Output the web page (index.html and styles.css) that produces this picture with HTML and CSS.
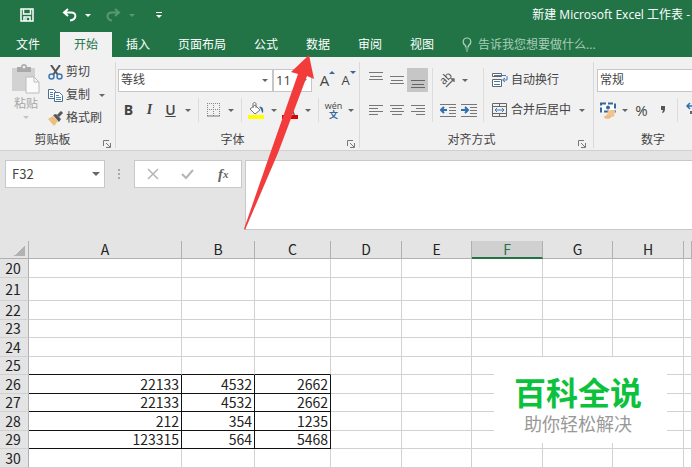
FILE: index.html
```html
<!DOCTYPE html>
<html lang="zh">
  <head>
    <meta charset="UTF-8" />
    <meta name="viewport" content="width=device-width, initial-scale=1.0" />
    <title>新建 Microsoft Excel 工作表</title>
    <link rel="stylesheet" href="styles.css">
  </head>
  <body>
    <header class="top">
      <div class="titlebar">
        <button class="quick" aria-label="保存">
          <svg width="14" height="14" viewBox="0 0 14 14"><path d="M1 1h12v12H1zM3.5 1v5h7V1M4 13V9h6v4M6 10v3" fill="none" stroke="#fff" stroke-width="1.5"/></svg>
        </button>
        <button class="quick undo" aria-label="撤消">
          <svg width="15" height="14" viewBox="0 0 15 14"><path d="M6 1L2 4.5L6 8M2.500 4.500H9C15 4.500 15 11.500 8 12.500" fill="none" stroke="#fff" stroke-width="2"/></svg>
        </button>
        <button class="caret light" aria-label="撤消列表"></button>
        <button class="quick redo" aria-label="恢复" disabled>
          <svg width="15" height="14" viewBox="0 0 15 14"><path d="M9 1L13 4.500L9 8M12.500 4.500H6C0 4.500 0 11.500 6 12.500" fill="none" stroke="#fff" stroke-width="2"/></svg>
        </button>
        <button class="caret light redo" aria-label="恢复列表" disabled></button>
        <button class="caret light custom" aria-label="自定义快速访问工具栏"></button>
        <div class="doc-name">新建 Microsoft Excel 工作表 -</div>
      </div>
      <nav class="tabs">
        <button class="tab file">文件</button>
        <button class="tab active">开始</button>
        <button class="tab">插入</button>
        <button class="tab">页面布局</button>
        <button class="tab">公式</button>
        <button class="tab">数据</button>
        <button class="tab">审阅</button>
        <button class="tab">视图</button>
        <button class="tab tell">
          <svg width="10" height="15" viewBox="0 0 10 15"><path d="M3.500 10V8.500C0 6.500 .5 1 5 1S10 6.500 6.500 8.500V10zM3.500 12h3M4 14h2" fill="none" stroke="#a9cdb8" stroke-width="1.200"/></svg>
          告诉我您想要做什么...
        </button>
      </nav>
    </header>

    <section class="ribbon">
      <div class="group">
        <div class="tools clipboard">
          <button class="paste">
            <svg width="28" height="30" viewBox="0 0 28 30"><path d="M0 4h23v23H0z" fill="#d2d2d2"/><path d="M5 3h4c0-4 6-4 6 0h4v5H5z" fill="#a9a9a9"/><circle cx="12" cy="3" r="1.500" fill="#eee"/><path d="M14 13h8l5 5v11H14z" fill="#fafafa" stroke="#bcbcbc"/><path d="M22 13v5h5" fill="none" stroke="#bcbcbc"/></svg>
            粘贴
            <i class="arrow"></i>
          </button>
          <div class="column">
            <button class="item">
              <svg width="15" height="15" viewBox="0 0 15 15"><path d="M3 0l7 10M12 0L5 10" stroke="#555" stroke-width="2" fill="none"/><circle cx="3.500" cy="11.500" r="2.500" fill="none" stroke="#3f78b0" stroke-width="1.500"/><circle cx="11.500" cy="11.500" r="2.500" fill="none" stroke="#3f78b0" stroke-width="1.500"/></svg>
              剪切
            </button>
            <button class="item">
              <svg width="15" height="15" viewBox="0 0 15 15"><path d="M.5 1.500h5l2 2v7h-7z" fill="#fff" stroke="#4d6f91"/><path d="M6.500 4.500h5l3 3v6h-8z" fill="#fff" stroke="#4d6f91"/><path d="M2 4.500h3M2 6.500h3M2 8.500h3M8 7.500h3M8 9.500h5M8 11.500h5" stroke="#4d83b5"/></svg>
              复制
              <i class="arrow"></i>
            </button>
            <button class="item">
              <svg width="15" height="15" viewBox="0 0 15 15"><path d="M0 8l5-3 5 5-4 5z" fill="#eebf7c"/><path d="M5 4l3-1 5 5-2 3z" fill="#555"/><path d="M10 5l4-4" stroke="#555" stroke-width="3"/></svg>
              格式刷
            </button>
          </div>
        </div>
        <div class="caption"><span>剪贴板</span><button class="launch" aria-label="剪贴板设置"><svg width="8" height="8" viewBox="0 0 8 8"><path d="M.5 6V.5H6M3 3l4 4M7.500 3v4.500H3" fill="none" stroke="#777"/></svg></button></div>
      </div>

      <div class="group font">
        <div class="tools">
          <div class="column">
            <div class="row">
              <div class="picker font-name">
                <select aria-label="字体"><option>等线</option></select>
                <i class="arrow"></i>
              </div>
              <div class="picker font-size">
                <select aria-label="字号"><option>11</option></select>
                <i class="arrow"></i>
              </div>
              <button class="tool letter" aria-label="增大字号">A<i class="mark up"></i></button>
              <button class="tool letter small" aria-label="减小字号">A<i class="mark"></i></button>
            </div>
            <div class="row">
              <button class="tool"><b>B</b></button>
              <button class="tool"><em>I</em></button>
              <button class="tool"><u>U</u></button>
              <button class="caret" aria-label="下划线列表"></button>
              <i class="sep"></i>
              <button class="tool" aria-label="边框"><svg width="14" height="14" viewBox="0 0 14 14"><path d="M.5 0v13M6.500 0v13M12.500 0v13M0 .5h13M0 6.500h13" stroke="#888" stroke-dasharray="1 1"/><path d="M0 13h13" stroke="#777" stroke-width="1"/></svg></button>
              <button class="caret" aria-label="边框列表"></button>
              <i class="sep"></i>
              <button class="tool" aria-label="填充颜色"><svg width="17" height="17" viewBox="0 0 17 17"><path d="M2 7l5-4 5 5-5 4z" fill="#fff" stroke="#777"/><path d="M5 6V2c0-2 3-2 3 0v4" fill="none" stroke="#777"/><path d="M11 5c3-1 5 1 4 6-2-1-1-4-4-6z" fill="#35699c"/><path d="M0 13h16v4H0z" fill="#ff0"/></svg></button>
              <button class="caret" aria-label="填充颜色列表"></button>
              <button class="tool ink" aria-label="字体颜色">A</button>
              <button class="caret" aria-label="字体颜色列表"></button>
              <i class="sep"></i>
              <button class="tool pinyin"><span>wén</span><span class="han">文</span></button>
              <button class="caret" aria-label="拼音列表"></button>
            </div>
          </div>
        </div>
        <div class="caption"><span>字体</span><button class="launch" aria-label="字体设置"><svg width="8" height="8" viewBox="0 0 8 8"><path d="M.5 6V.5H6M3 3l4 4M7.500 3v4.500H3" fill="none" stroke="#777"/></svg></button></div>
      </div>

      <div class="group align">
        <div class="tools">
          <div class="column">
            <div class="row">
              <button class="tool" aria-label="顶端对齐"><svg width="14" height="18" viewBox="0 0 14 18"><path d="M0 1.500h14M1 5.500h12M0 8.500h14" stroke="#777"/></svg></button>
              <button class="tool" aria-label="垂直居中"><svg width="14" height="18" viewBox="0 0 14 18"><path d="M0 5.500h14M1 9.500h12M0 12.500h14" stroke="#777"/></svg></button>
              <button class="tool pressed" aria-label="底端对齐"><svg width="14" height="18" viewBox="0 0 14 18"><path d="M0 9.500h14M1 13.500h12M0 16.500h14" stroke="#666"/></svg></button>
            </div>
            <div class="row">
              <button class="tool" aria-label="左对齐"><svg width="14" height="12" viewBox="0 0 14 12"><path d="M0 1.500h14M0 4.500h9M0 7.500h14M0 10.500h9" stroke="#777"/></svg></button>
              <button class="tool" aria-label="居中"><svg width="14" height="12" viewBox="0 0 14 12"><path d="M0 1.500h14M2 4.500h10M0 7.500h14M2 10.500h10" stroke="#777"/></svg></button>
              <button class="tool" aria-label="右对齐"><svg width="14" height="12" viewBox="0 0 14 12"><path d="M0 1.500h14M5 4.500h9M0 7.500h14M5 10.500h9" stroke="#777"/></svg></button>
            </div>
          </div>
          <i class="sep"></i>
          <div class="column">
            <div class="row">
              <button class="tool" aria-label="方向"><span class="slant">ab</span><svg width="17" height="16" viewBox="0 0 17 16"><path d="M7 15L15 7M12 7h3v3" fill="none" stroke="#666" stroke-width="1.300"/></svg></button>
              <button class="caret" aria-label="方向列表"></button>
            </div>
            <div class="row">
              <button class="tool" aria-label="减少缩进"><svg width="16" height="14" viewBox="0 0 16 14"><path d="M0 1.500h16M9 4.500h7M9 7.500h7M9 10.500h7M0 13.500h16" stroke="#777"/><path d="M4 4L1 7l3 3M1 7h6" fill="none" stroke="#2f70b3" stroke-width="2"/></svg></button>
              <button class="tool" aria-label="增加缩进"><svg width="16" height="14" viewBox="0 0 16 14"><path d="M0 1.500h16M9 4.500h7M9 7.500h7M9 10.500h7M0 13.500h16" stroke="#777"/><path d="M4 4l3 3-3 3M7 7H0" fill="none" stroke="#2f70b3" stroke-width="2"/></svg></button>
            </div>
          </div>
          <i class="sep"></i>
          <div class="column">
            <div class="row">
              <button class="wide"><svg width="16" height="16" viewBox="0 0 16 16"><path d="M.5 1.500h9v3h-9zM.5 7.500h9v7h-9z" fill="#fff" stroke="#666"/><path d="M2 3.500h7M2 9.500h6M2 12.500h6" stroke="#3c7ab5"/><path d="M10 3.500h4M15 4v4h-4M13 6l-2.500 2 2.500 2" fill="none" stroke="#3c7ab5"/></svg>自动换行</button>
            </div>
            <div class="row">
              <button class="wide"><svg width="16" height="16" viewBox="0 0 16 16"><path d="M.5 1.500h14v13H.5zM0 4.500h15M0 11.500h15M7.500 1v3M7.500 12v3" fill="none" stroke="#666"/><path d="M3 8h9M5 6L3 8l2 2M10 6l2 2-2 2" fill="none" stroke="#3c7ab5"/></svg>合并后居中</button>
              <button class="caret" aria-label="合并列表"></button>
            </div>
          </div>
        </div>
        <div class="caption"><span>对齐方式</span><button class="launch" aria-label="对齐设置"><svg width="8" height="8" viewBox="0 0 8 8"><path d="M.5 6V.5H6M3 3l4 4M7.500 3v4.500H3" fill="none" stroke="#777"/></svg></button></div>
      </div>

      <div class="group number">
        <div class="tools">
          <div class="column">
            <div class="row">
              <div class="picker number-format">
                <select aria-label="数字格式"><option>常规</option></select>
                <i class="arrow"></i>
              </div>
            </div>
            <div class="row">
              <button class="tool" aria-label="会计数字格式"><svg width="16" height="17" viewBox="0 0 16 17"><path d="M1 1.500h14v8H1z" fill="#fff" stroke="#35699c" stroke-width="2" stroke-dasharray="5 2"/><circle cx="8" cy="5.500" r="2" fill="#35699c"/><ellipse cx="11.500" cy="10" rx="4" ry="2" fill="#f0c48c"/><ellipse cx="10.500" cy="13" rx="4" ry="2" fill="#f0c48c"/><ellipse cx="7.500" cy="15" rx="3.500" ry="1.800" fill="#edbb80"/></svg></button>
              <button class="caret" aria-label="货币列表"></button>
              <button class="tool percent">%</button>
              <button class="tool" aria-label="千位分隔样式"><svg width="6" height="8" viewBox="0 0 6 8"><path d="M1 0h4v3c0 2-1 4-3 4l1-3H1z" fill="#555"/></svg></button>
              <i class="sep"></i>
              <button class="tool" aria-label="增加小数位数"><svg width="16" height="16" viewBox="0 0 16 16"><path d="M7 4H2M5 1L2 4l3 3" fill="none" stroke="#2f70b3" stroke-width="1.500"/><path d="M6 9v3" stroke="#666" stroke-width="2"/><circle cx="11" cy="10" r="2.500" fill="none" stroke="#666"/></svg></button>
            </div>
          </div>
        </div>
        <div class="caption"><span>数字</span></div>
      </div>
    </section>

    <section class="formula-bar">
      <div class="name-box">
        <input type="text" value="F32" aria-label="名称框" />
        <button class="caret" aria-label="名称列表"></button>
      </div>
      <i class="dots"></i>
      <div class="checks">
        <button aria-label="取消"><svg width="12" height="12" viewBox="0 0 12 12"><path d="M1 1l10 10M11 1L1 11" stroke="#b5b5b5" stroke-width="1.500"/></svg></button>
        <button aria-label="输入"><svg width="13" height="12" viewBox="0 0 13 12"><path d="M1 6l4 4 7-8" fill="none" stroke="#b5b5b5" stroke-width="2"/></svg></button>
        <button class="fx"><em>f</em><small>x</small></button>
      </div>
      <textarea aria-label="编辑栏"></textarea>
    </section>

    <main class="sheet">
      <table>
        <colgroup>
          <col class="c-num" /><col class="c-a" /><col class="c-b" /><col class="c-c" />
          <col class="c-odd" /><col class="c-even" /><col class="c-odd" /><col class="c-even" /><col class="c-odd" /><col />
        </colgroup>
        <thead>
          <tr>
            <th class="corner"></th><th>A</th><th>B</th><th>C</th><th>D</th><th>E</th><th class="current">F</th><th>G</th><th>H</th><th></th>
          </tr>
        </thead>
        <tbody>
          <tr><th>20</th><td></td><td></td><td></td><td></td><td></td><td></td><td></td><td></td><td></td></tr>
          <tr class="tall"><th>21</th><td></td><td></td><td></td><td></td><td></td><td></td><td></td><td></td><td></td></tr>
          <tr><th>22</th><td></td><td></td><td></td><td></td><td></td><td></td><td></td><td></td><td></td></tr>
          <tr><th>23</th><td></td><td></td><td></td><td></td><td></td><td></td><td></td><td></td><td></td></tr>
          <tr><th>24</th><td></td><td></td><td></td><td></td><td></td><td></td><td></td><td></td><td></td></tr>
          <tr class="above"><th>25</th><td></td><td></td><td></td><td></td><td></td><td></td><td></td><td></td><td></td></tr>
          <tr class="data"><th>26</th><td>22133</td><td>4532</td><td>2662</td><td></td><td></td><td></td><td></td><td></td><td></td></tr>
          <tr class="data"><th>27</th><td>22133</td><td>4532</td><td>2662</td><td></td><td></td><td></td><td></td><td></td><td></td></tr>
          <tr class="data"><th>28</th><td>212</td><td>354</td><td>1235</td><td></td><td></td><td></td><td></td><td></td><td></td></tr>
          <tr class="data"><th>29</th><td>123315</td><td>564</td><td>5468</td><td></td><td></td><td></td><td></td><td></td><td></td></tr>
          <tr><th>30</th><td></td><td></td><td></td><td></td><td></td><td></td><td></td><td></td><td></td></tr>
        </tbody>
      </table>
    </main>

    <svg class="pointer" width="70" height="176" viewBox="0 0 70 176"><path d="M65 0L70 24L63 21L34 98L1 175L0 174L27 96L54 19L47 17z" fill="#f23c3c"/></svg>

    <aside class="watermark">
      <strong>百科全说</strong>
      <span>助你轻松解决</span>
    </aside>
  </body>
</html>
```

FILE: styles.css
```css
* {
  box-sizing: border-box;
}
body {
  margin: 0;
  min-height: 100vh;
  position: relative;
  overflow: hidden;
  background: #fff;
  color: #444;
  font-family: "Open Sans", "Noto Sans CJK SC", sans-serif;
  font-size: 12px;
  line-height: 16px;
}
button,
input,
select,
textarea {
  font: inherit;
  color: inherit;
  border: none;
  background: none;
  padding: 0;
  margin: 0;
  border-radius: 0;
  outline: none;
}
button {
  white-space: nowrap;
}
svg {
  display: block;
  flex: none;
}

/* 标题栏和选项卡 */
.top {
  background: #227447;
  color: #fff;
}
.titlebar {
  display: flex;
  align-items: center;
  height: 32px;
  padding: 0 2px 2px 20px;
}
.quick.undo {
  margin-left: 28px;
  margin-right: 4px;
}
.quick.redo {
  margin-left: 12px;
  margin-right: 4px;
}
.redo {
  opacity: 0.25;
}
.doc-name {
  margin-left: auto;
  white-space: nowrap;
}
.tabs {
  display: flex;
  height: 25px;
}
.tab {
  padding: 0 14px;
}
.tab.file {
  width: 56px;
  padding: 0;
  margin-right: 4px;
}
.tab.active {
  background: #f1f1f1;
  color: #227447;
}
.tab.tell {
  display: flex;
  align-items: center;
  gap: 6px;
  color: #a9cdb8;
}

/* 三角 */
.caret {
  display: flex;
  align-items: center;
  justify-content: center;
  flex: none;
  width: 13px;
  height: 24px;
}
.caret::before,
.arrow {
  content: "";
  border: 3px solid transparent;
  border-top-color: #666;
  border-bottom: none;
}
.light::before {
  border-top-color: #fff;
}
.custom {
  margin-left: 14px;
  flex-direction: column;
  gap: 2px;
}
.custom::before {
  order: 2;
}
.custom::after {
  content: "";
  width: 6px;
  height: 1px;
  background: #fff;
}

/* 功能区 */
.ribbon {
  display: flex;
  background: #f1f1f1;
  border-bottom: 1px solid #d0d0d0;
  padding: 5px 0 2px;
  overflow: hidden;
}
.group {
  flex: none;
  border-right: 1px solid #d9d9d9;
  padding: 0 2px;
}
.group.align {
  padding: 0 5px;
}
.group.number {
  padding: 0 3px;
}
.tools {
  display: flex;
  height: 70px;
  padding-top: 6px;
}
.column {
  display: flex;
  flex-direction: column;
  gap: 6px;
}
.row {
  display: flex;
  align-items: center;
  height: 24px;
}
.tool {
  position: relative;
  display: flex;
  align-items: center;
  justify-content: center;
  flex: none;
  width: 21px;
  height: 24px;
  font-size: 14px;
}
.tool em {
  font-family: "Liberation Serif", serif;
  font-weight: bold;
}
.tool u {
  font-weight: 600;
}
.pressed {
  background: #c6c6c6;
}
.sep {
  flex: none;
  width: 1px;
  height: 24px;
  margin: 0 4px;
  background: #dcdcdc;
}
.tools > .sep {
  height: 54px;
}
.wide {
  display: flex;
  align-items: center;
  gap: 3px;
  height: 24px;
  padding: 0 4px;
}
.caption {
  display: flex;
  align-items: center;
  height: 16px;
}
.caption span {
  flex: 1;
  text-align: center;
}
.launch {
  align-self: flex-end;
  width: 10px;
}

.clipboard {
  width: 111px;
  padding: 2px 0 0 10px;
  gap: 8px;
}
.clipboard .column {
  gap: 7px;
}
.paste {
  display: flex;
  flex-direction: column;
  align-items: center;
  align-self: flex-start;
  width: 28px;
  color: #a6a6a6;
}
.paste svg {
  margin-bottom: 2px;
}
.paste .arrow {
  border-top-color: #c4c4c4;
  margin-top: 4px;
}
.item {
  display: flex;
  align-items: center;
  gap: 3px;
  height: 16px;
}
.item .arrow {
  margin-left: 6px;
}

.picker {
  display: flex;
  align-items: center;
  height: 23px;
  padding: 0 4px 0 2px;
  border: 1px solid #c6c6c6;
  background: #fff;
}
.picker select {
  appearance: none;
  flex: 1;
  min-width: 0;
}
.font-name {
  width: 155px;
}
.font-size {
  width: 39px;
  margin-right: 2px;
  font-size: 13px;
}
.number-format {
  width: 112px;
}
.letter {
  font-size: 15px;
}
.letter.small {
  font-size: 13px;
}
.mark {
  position: absolute;
  right: 0;
  top: 3px;
  border: 3px solid transparent;
  border-top-color: #35699c;
  border-bottom: none;
}
.mark.up {
  border-top: none;
  border-bottom: 3px solid #35699c;
}
.ink::after {
  content: "";
  position: absolute;
  left: 2px;
  bottom: 3px;
  width: 16px;
  height: 4px;
  background: #e00000;
}
.pinyin {
  flex-direction: column;
  font-size: 9px;
  line-height: 9px;
}
.han {
  color: #35699c;
  font-weight: bold;
}
.slant {
  position: absolute;
  left: 2px;
  top: 2px;
  font-size: 11px;
  transform: rotate(-45deg);
}
.percent {
  font-size: 15px;
}

/* 编辑栏 */
.formula-bar {
  display: flex;
  align-items: flex-start;
  background: #e4e4e4;
  padding: 9px 0 11px 5px;
}
.name-box,
.checks {
  display: flex;
  align-items: center;
  flex: none;
  height: 28px;
  border: 1px solid #c8c8c8;
  background: #fff;
}
.name-box {
  width: 100px;
  padding: 0 2px 0 6px;
}
.name-box input {
  flex: 1;
  min-width: 0;
  font-family: "Noto Sans CJK SC", sans-serif;
  font-size: 13px;
}
.name-box .caret::before {
  border-width: 4px 4px 0;
}
.dots {
  width: 2px;
  height: 11px;
  margin: 9px 14px 0 13px;
  background: repeating-linear-gradient(#aaa 0 2px, transparent 2px 4px);
}
.checks {
  width: 108px;
  margin-right: 3px;
}
.checks button {
  display: flex;
  flex: 1;
  align-items: center;
  justify-content: center;
}
.checks .fx {
  font: bold 15px "Liberation Serif", serif;
  color: #666;
}
.fx small {
  font-size: 11px;
  font-style: italic;
}
textarea {
  flex: 1;
  min-width: 0;
  height: 70px;
  border: 1px solid #c8c8c8;
  border-right: none;
  background: #fff;
  resize: none;
}

/* 表格 */
.sheet {
  font-family: "Noto Sans CJK SC", sans-serif;
  font-size: 14px;
  color: #222;
}
table {
  width: 100%;
  table-layout: fixed;
  border-collapse: separate;
  border-spacing: 0;
}
th,
td {
  height: 18px;
  padding: 0 2px 0 0;
  border-right: 1px solid #d2d2d2;
  border-bottom: 1px solid #d2d2d2;
  font-weight: normal;
  line-height: 17px;
}
td {
  text-align: right;
}
th {
  background: #e4e4e4;
  border-color: #b0b0b0;
  text-align: center;
}
thead th {
  padding: 0;
}
tbody tr:nth-child(odd) > * {
  height: 19px;
}
tbody tr.tall > * {
  height: 23px;
}
tbody th {
  border-bottom-color: #d0d0d0;
}
.corner {
  background: linear-gradient(135deg, transparent 50%, #b2b2b2 50%) no-repeat 14px 4px / 11px 11px #e4e4e4;
}
.current {
  background: #d0d0d0;
  color: #227447;
  border-bottom: 2px solid #227447;
  line-height: 16px;
}
.above td:nth-child(-n + 4),
.data td:nth-child(-n + 4) {
  border-bottom-color: #111;
}
.data td:nth-child(-n + 4) {
  border-right-color: #111;
}
.c-num {
  width: 29px;
}
.c-a {
  width: 153px;
}
.c-b {
  width: 73px;
}
.c-c {
  width: 76px;
}
.c-odd {
  width: 71px;
}
.c-even {
  width: 70px;
}

/* 箭头和水印 */
.pointer {
  position: absolute;
  left: 244px;
  top: 55px;
  pointer-events: none;
}
.watermark {
  position: absolute;
  right: 25px;
  bottom: 25px;
  display: flex;
  flex-direction: column;
  align-items: center;
  padding: 14px 25px 8px 20px;
  background: #fff;
  font-family: "Noto Sans CJK SC", sans-serif;
}
.watermark strong {
  color: #0cc13c;
  font-size: 32px;
  line-height: 40px;
}
.watermark span {
  color: #999;
  font-size: 18px;
  line-height: 24px;
}
```
